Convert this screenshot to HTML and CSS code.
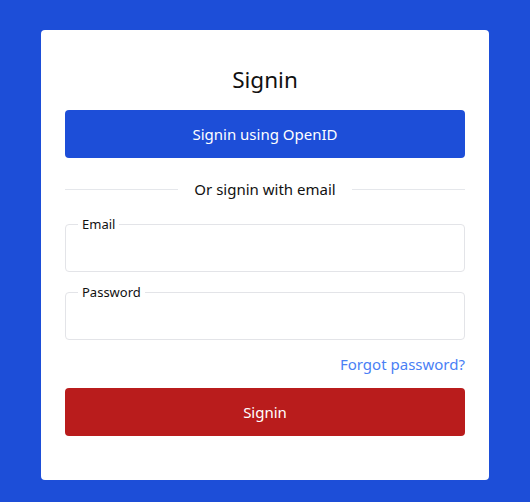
FILE: index.html
```html
<!DOCTYPE html>
<html lang="en">
<head>
<meta charset="utf-8">
<title>Signin</title>
<link rel="stylesheet" href="styles.css">
</head>
<body>
<main class="card">
  <h1 class="title">Signin</h1>
  <button class="btn btn-primary" type="button">Signin using OpenID</button>
  <div class="divider"><span class="divider-text">Or signin with email</span></div>
  <form class="form">
    <fieldset class="field">
      <legend class="field-label">Email</legend>
      <input class="field-input" type="email">
    </fieldset>
    <fieldset class="field">
      <legend class="field-label">Password</legend>
      <input class="field-input" type="password">
    </fieldset>
    <div class="forgot-row"><a class="forgot" href="#">Forgot password?</a></div>
    <button class="btn btn-danger" type="button">Signin</button>
  </form>
</main>
</body>
</html>
```
FILE: styles.css
```css
html, body {
  margin: 0;
  padding: 0;
}
body {
  background: #1d4ed8;
  font-family: "Noto Sans", "Open Sans", sans-serif;
  color: #111;
  min-height: 502px;
  padding-top: 30px;
  box-sizing: border-box;
}
.card {
  width: 448px;
  height: 450px;
  margin: 0 auto;
  background: #fff;
  border-radius: 4px;
  padding: 34px 24px 24px;
  box-sizing: border-box;
  display: flex;
  flex-direction: column;
}
.title {
  margin: 0;
  font-size: 22.5px;
  line-height: 32px;
  font-weight: 400;
  text-align: center;
}
.btn {
  display: block;
  width: 100%;
  height: 48px;
  border: none;
  border-radius: 4px;
  color: #fff;
  font-family: inherit;
  font-size: 15px;
  cursor: pointer;
}
.btn-primary {
  margin-top: 14px;
  background: #1d4ed8;
}
.btn-danger {
  background: #b91c1c;
  margin-top: 12px;
}
.divider {
  margin-top: 19px;
  display: flex;
  align-items: center;
  gap: 16px;
  font-size: 15px;
  line-height: 24px;
}
.divider::before, .divider::after {
  content: "";
  flex: 1;
  height: 1px;
  background: #e5e7eb;
}
.form {
  margin-top: 13px;
  display: flex;
  flex-direction: column;
}
.field {
  margin: 0 0 10px;
  padding: 0;
  border: 1px solid #e3e4e8;
  border-radius: 4px;
  min-width: 0;
}
.field-label {
  margin-left: 12px;
  padding: 0 4px;
  font-size: 13px;
  line-height: 20px;
}
.field-input {
  display: block;
  width: 100%;
  height: 37px;
  border: none;
  outline: none;
  background: transparent;
  padding: 0 16px;
  box-sizing: border-box;
  font-family: inherit;
  font-size: 15px;
}
.forgot-row {
  margin-top: 2px;
  display: flex;
  justify-content: flex-end;
  font-size: 15px;
  line-height: 24px;
}
.forgot {
  color: #4a7ff5;
  text-decoration: none;
}
```
